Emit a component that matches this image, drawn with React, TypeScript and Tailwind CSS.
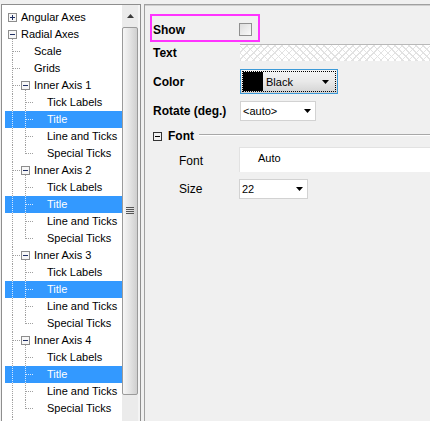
import React from "react";
import clsx from "clsx";

// Property dialog: axis tree on the left, Title settings on the right.
type Node = {
  label: string;
  open?: boolean;
  closed?: boolean;
  selected?: boolean;
  children?: Node[];
};

type Row = { node: Node; level: number; cols: boolean[]; last: boolean };

const axisChildren = (): Node[] => [
  { label: "Tick Labels" },
  { label: "Title", selected: true },
  { label: "Line and Ticks" },
  { label: "Special Ticks" },
];

const TREE: Node[] = [
  { label: "Angular Axes", closed: true },
  {
    label: "Radial Axes",
    open: true,
    children: [
      { label: "Scale" },
      { label: "Grids" },
      { label: "Inner Axis 1", open: true, children: axisChildren() },
      { label: "Inner Axis 2", open: true, children: axisChildren() },
      { label: "Inner Axis 3", open: true, children: axisChildren() },
      { label: "Inner Axis 4", open: true, children: axisChildren() },
      { label: "Outer Axis", closed: true },
    ],
  },
];

function flatten(nodes: Node[], level: number, cols: boolean[], out: Row[]): Row[] {
  nodes.forEach((node, i) => {
    const last = i === nodes.length - 1;
    out.push({ node, level, cols, last });
    if (node.open && node.children) {
      flatten(node.children, level + 1, level === 0 ? [] : [...cols, !last], out);
    }
  });
  return out;
}

const ROWS = flatten(TREE, 0, [], []);

function Guide({ row }: { row: Row }) {
  const { level, cols, last, node } = row;
  const w = 16 + 13 * level;
  const stroke = node.selected ? "#d6e9ff" : "#a0a0a0";
  const lines: React.ReactNode[] = [];
  cols.forEach((on, d) => {
    if (on) lines.push(<line key={`c${d}`} x1={7.5 + 13 * d} y1={0} x2={7.5 + 13 * d} y2={17} />);
  });
  if (level >= 1) {
    const p = level - 1;
    lines.push(<line key="v" x1={7.5 + 13 * p} y1={0} x2={7.5 + 13 * p} y2={last ? 9 : 17} />);
    lines.push(<line key="h" x1={8 + 13 * p} y1={8.5} x2={16 + 13 * p} y2={8.5} />);
  }
  if (node.open) {
    lines.push(<line key="o" x1={7.5 + 13 * level} y1={13} x2={7.5 + 13 * level} y2={17} />);
  }
  const bx = 3 + 13 * level;
  return (
    <svg width={w} height={17} className="shrink-0" shapeRendering="crispEdges">
      <g stroke={stroke} strokeDasharray="1 1">{lines}</g>
      {(node.open || node.closed) && (
        <g>
          <rect x={bx + 0.5} y={4.5} width={8} height={8} fill="#f7f7f7" stroke="#8d8d8d" />
          <line x1={bx + 2} y1={8.5} x2={bx + 7} y2={8.5} stroke="#1f2f63" />
          {node.closed && <line x1={bx + 4.5} y1={6} x2={bx + 4.5} y2={11} stroke="#1f2f63" />}
        </g>
      )}
    </svg>
  );
}

function Arrow() {
  return (
    <svg width={7} height={4} className="shrink-0">
      <path d="M0 0H7L3.5 4Z" fill="#000" />
    </svg>
  );
}

function Scrollbar() {
  return (
    <div className="flex w-[16px] shrink-0 flex-col bg-[#ebebeb]">
      <div className="flex h-[22px] items-center justify-center">
        <svg width={7} height={4}>
          <path d="M0 4H7L3.5 0Z" fill="#3a3a3a" />
        </svg>
      </div>
      <div className="flex h-[368px] items-center justify-center rounded-[2px] border border-[#9a9a9a] bg-gradient-to-r from-[#f6f6f6] via-[#e4e4e4] to-[#cfcfcf]">
        <svg width={8} height={8}>
          <g stroke="#555" shapeRendering="crispEdges">
            <line x1={0} y1={0.5} x2={8} y2={0.5} />
            <line x1={0} y1={2.5} x2={8} y2={2.5} />
            <line x1={0} y1={4.5} x2={8} y2={4.5} />
            <line x1={0} y1={6.5} x2={8} y2={6.5} />
          </g>
        </svg>
      </div>
    </div>
  );
}

function Tree() {
  return (
    <div className="ml-[1px] flex w-[140px] shrink-0 border-l border-t border-r border-[#8e8e8e] bg-white">
      <div className="flex min-w-0 flex-1 flex-col pl-[3px] pt-[4px]">
        {ROWS.map((row, i) => (
          <div
            key={i}
            className={clsx(
              "flex h-[17px] items-center",
              row.node.selected ? "bg-[#3399ff] text-white" : "text-black"
            )}
          >
            <Guide row={row} />
            <span className="whitespace-nowrap text-[11px] leading-[17px]">{row.node.label}</span>
          </div>
        ))}
      </div>
      <Scrollbar />
      <div className="w-[2px] shrink-0 bg-[#f4f4f4]" />
    </div>
  );
}

function Label({ children }: { children: React.ReactNode }) {
  return <span className="w-[87px] shrink-0 text-[12px] font-bold leading-[14px]">{children}</span>;
}

function Panel() {
  return (
    <div className="ml-[3px] flex min-w-0 flex-1 flex-col border-l border-t border-[#a0a0a0]">
      <div className="flex flex-col border-t border-[#cfcfcf]">
        <div className="ml-[5px] mt-[8px] flex h-[28px] w-[110px] items-center border-2 border-[#ff33ff] pl-[1px] pt-[3px]">
          <span className="w-[86px] shrink-0 text-[12px] font-bold leading-[14px]">Show</span>
          <div className="h-[13px] w-[13px] border border-[#8f8f8f] bg-gradient-to-br from-[#dcdcdc] to-[#fafafa]" />
        </div>

        <div className="mt-[2px] flex h-[17px] items-center pl-[8px]">
          <Label>Text</Label>
          <div className="h-full flex-1 border-t border-[#b9b9b9] bg-white bg-[image:repeating-linear-gradient(45deg,#e2e2e2_0_1px,transparent_1px_5px),repeating-linear-gradient(-45deg,#e2e2e2_0_1px,transparent_1px_5px)]" />
        </div>

        <div className="mt-[8px] flex h-[25px] items-center pl-[8px]">
          <Label>Color</Label>
          <div className="h-full w-[98px] border border-[#3c9ad8] bg-gradient-to-b from-[#f5f5f5] via-[#e9e9e9] to-[#d3d3d3] p-[1px]">
            <div className="flex h-full items-center border border-dotted border-black">
              <div className="h-full w-[20px] bg-black" />
              <span className="ml-[3px] text-[11px] leading-[14px]">Black</span>
              <span className="ml-auto mr-[6px] flex">
                <Arrow />
              </span>
            </div>
          </div>
        </div>

        <div className="mt-[7px] flex h-[20px] items-center pl-[8px]">
          <Label>Rotate (deg.)</Label>
          <div className="flex h-full w-[76px] items-center border border-[#d2d2d2] bg-white pl-[2px] pr-[4px]">
            <span className="text-[11px] leading-[14px]">&lt;auto&gt;</span>
            <span className="ml-auto flex">
              <Arrow />
            </span>
          </div>
        </div>

        <div className="mt-[9px] flex h-[12px] items-center pl-[8px]">
          <svg width={9} height={9} className="shrink-0" shapeRendering="crispEdges">
            <rect x={0.5} y={0.5} width={8} height={8} fill="none" stroke="#333" />
            <line x1={2} y1={4.5} x2={7} y2={4.5} stroke="#000" />
          </svg>
          <span className="ml-[6px] text-[12px] font-bold leading-[14px]">Font</span>
          <div className="ml-[5px] mt-[4px] h-[2px] flex-1 self-start border-t border-b border-t-[#a8a8a8] border-b-white" />
        </div>

        <div className="mt-[5px] flex h-[25px] pl-[34px]">
          <span className="w-[60px] shrink-0 pt-[7px] text-[12px] leading-[14px]">Font</span>
          <div className="h-full flex-1 border-t border-l border-[#e2e2e2] bg-white pl-[18px] pt-[3px] text-[11px] leading-[14px]">
            Auto
          </div>
        </div>

        <div className="mt-[7px] flex h-[20px] items-center pl-[34px]">
          <span className="w-[60px] shrink-0 text-[12px] leading-[14px]">Size</span>
          <div className="flex h-full w-[69px] items-center border border-[#d2d2d2] bg-white pl-[2px] pr-[4px]">
            <span className="text-[11px] leading-[14px]">22</span>
            <span className="ml-auto flex">
              <Arrow />
            </span>
          </div>
        </div>
      </div>
    </div>
  );
}

export default function App() {
  return (
    <div className="flex h-[421px] w-[430px] overflow-hidden bg-[#f0f0f0] pt-[4px] font-['Liberation_Sans',Arial,sans-serif] text-black">
      <Tree />
      <Panel />
    </div>
  );
}
